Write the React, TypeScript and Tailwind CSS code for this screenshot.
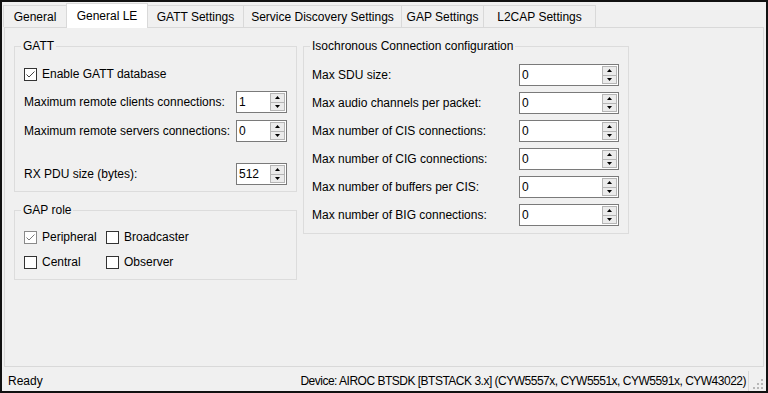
import React from "react"

const tabs = [
  { label: "General", w: "w-[64px]" },
  { label: "General LE", w: "w-[82px]", active: true },
  { label: "GATT Settings", w: "w-[97px]" },
  { label: "Service Discovery Settings", w: "w-[159px]" },
  { label: "GAP Settings", w: "w-[83px]" },
  { label: "L2CAP Settings", w: "w-[113px]" },
]

const isoRows = [
  "Max SDU size:",
  "Max audio channels per packet:",
  "Max number of CIS connections:",
  "Max number of CIG connections:",
  "Max number of buffers per CIS:",
  "Max number of BIG connections:",
]

function Arrow({ up }: { up?: boolean }) {
  return (
    <svg width="5" height="3" viewBox="0 0 5 3">
      <polygon points={up ? "0,3 2.5,0 5,3" : "0,0 2.5,3 5,0"} fill="#000" />
    </svg>
  )
}

function Spin({ value, w }: { value: string; w: string }) {
  return (
    <div className={`flex h-[22px] shrink-0 border border-[#7a7a7a] bg-white ${w}`}>
      <div className="flex-1 pl-[2px] leading-[20px]">{value}</div>
      <div className="flex w-[16px] flex-col py-px pr-px">
        <div className="flex flex-1 items-center justify-center border border-[#b5b5b5] bg-[#ebebeb]">
          <Arrow up />
        </div>
        <div className="flex flex-1 items-center justify-center border border-t-0 border-[#b5b5b5] bg-[#ebebeb]">
          <Arrow />
        </div>
      </div>
    </div>
  )
}

function Check({ label, checked, dim }: { label: string; checked?: boolean; dim?: boolean }) {
  return (
    <label className="flex h-[16px] items-center gap-[5px]">
      <span
        className={`flex h-[13px] w-[13px] items-center justify-center border bg-white ${
          dim ? "border-[#8a8a8a]" : "border-[#333333]"
        }`}
      >
        {checked && (
          <svg width="11" height="11" viewBox="0 0 11 11">
            <path d="M1.5 5.5 L4 8 L9.5 2.5" fill="none" stroke={dim ? "#7a7a7a" : "#444"} strokeWidth="1" />
          </svg>
        )}
      </span>
      <span className="text-black">{label}</span>
    </label>
  )
}

export default function App() {
  return (
    <div className="flex h-[393px] w-[768px] flex-col overflow-hidden border-2 border-[#111] bg-[#f0f0f0] font-['Liberation_Sans',Arial,sans-serif] text-[12px] leading-[16px] text-black">
      {/* Tabs */}
      <div className="mt-[1px] flex h-[24px] items-end pl-[1px]">
        {tabs.map((t, i) =>
          t.active ? (
            <div
              key={t.label}
              className={`relative z-10 -mb-px -ml-px flex h-[25px] items-center justify-center border border-b-0 border-[#d9d9d9] bg-white ${t.w}`}
            >
              {t.label}
            </div>
          ) : (
            <div
              key={t.label}
              className={`flex h-[22px] items-center justify-center border border-b-0 border-[#d9d9d9] bg-[#f0f0f0] ${t.w} ${i > 0 ? "-ml-px" : ""}`}
            >
              {t.label}
            </div>
          )
        )}
      </div>

      {/* Panel */}
      <div className="mx-[2px] flex h-[340px] items-start gap-[6px] border border-[#d9d9d9] pl-[9px] pt-[10px]">
        {/* Left column */}
        <div className="flex w-[283px] flex-col">
          <fieldset className="border border-[#dcdcdc] pb-[6px] pl-[6px] pr-[9px]">
            <legend className="px-[2px] leading-[16px]">GATT</legend>
            <div className="flex flex-col pl-[3px]">
              <div className="mt-[12px]">
                <Check label="Enable GATT database" checked />
              </div>
              <div className="mt-[9px] flex items-center justify-between">
                <span>Maximum remote clients connections:</span>
                <Spin value="1" w="w-[51px]" />
              </div>
              <div className="mt-[7px] flex items-center justify-between">
                <span>Maximum remote servers connections:</span>
                <Spin value="0" w="w-[51px]" />
              </div>
              <div className="mt-[21px] flex items-center justify-between">
                <span>RX PDU size (bytes):</span>
                <Spin value="512" w="w-[51px]" />
              </div>
            </div>
          </fieldset>

          <fieldset className="mt-[10px] border border-[#dcdcdc] pb-[9px] pl-[6px] pr-[9px]">
            <legend className="px-[2px] leading-[16px]">GAP role</legend>
            <div className="mt-[11px] grid grid-cols-[82px_auto] gap-y-[9px] pl-[3px]">
              <Check label="Peripheral" checked dim />
              <Check label="Broadcaster" />
              <Check label="Central" />
              <Check label="Observer" />
            </div>
          </fieldset>
        </div>

        {/* Isochronous */}
        <fieldset className="w-[326px] border border-[#dcdcdc] pb-[7px] pl-[6px] pr-[9px]">
          <legend className="px-[2px] leading-[16px]">Isochronous Connection configuration</legend>
          <div className="mt-[10px] flex flex-col gap-[6px] pl-[2px]">
            {isoRows.map((r) => (
              <div key={r} className="flex items-center justify-between">
                <span>{r}</span>
                <Spin value="0" w="w-[100px]" />
              </div>
            ))}
          </div>
        </fieldset>
      </div>

      {/* Status bar */}
      <div className="flex h-[24px] items-center pl-[6px] pt-[3px]">
        <span>Ready</span>
        <span className="ml-auto mr-[2px] tracking-[-0.5px]">
          Device: AIROC BTSDK [BTSTACK 3.x] (CYW5557x, CYW5551x, CYW5591x, CYW43022)
        </span>
        <div className="h-[20px] w-px self-end bg-[#d9d9d9]" />
        <div className="flex h-full w-[17px] items-end justify-end pb-[1px] pr-[2px]">
          <svg width="12" height="12" viewBox="0 0 12 12">
            <rect x="9" y="1" width="2" height="2" fill="#b8b8b8" />
            <rect x="5" y="5" width="2" height="2" fill="#b8b8b8" />
            <rect x="9" y="5" width="2" height="2" fill="#b8b8b8" />
            <rect x="1" y="9" width="2" height="2" fill="#b8b8b8" />
            <rect x="5" y="9" width="2" height="2" fill="#b8b8b8" />
            <rect x="9" y="9" width="2" height="2" fill="#b8b8b8" />
          </svg>
        </div>
      </div>
    </div>
  )
}
